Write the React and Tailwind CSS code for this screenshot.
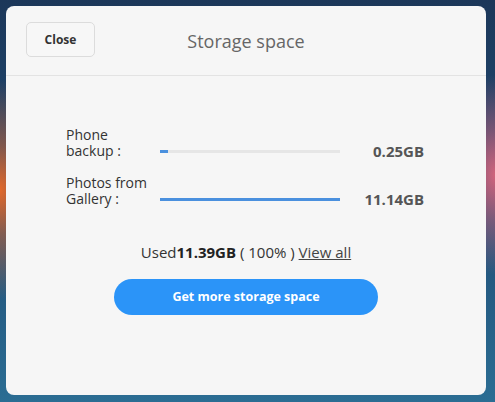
import React from "react";

export default function App() {
  return (
    <div
      className="w-[495px] h-[402px] pt-[6px] pl-[6px] pr-[9px] pb-[7px] bg-[radial-gradient(ellipse_60px_110px_at_0px_190px,#e2682a_0%,rgba(226,104,42,0.5)_40%,transparent_100%),radial-gradient(ellipse_50px_100px_at_495px_175px,#d2647c_0%,rgba(210,100,124,0.5)_45%,transparent_100%),linear-gradient(180deg,#1c3759_0%,#1f4a73_45%,#2b6d93_100%)]"
      style={{ fontFamily: '"Open Sans", "Noto Sans", sans-serif' }}
    >
      <div className="w-full h-full bg-[#f6f6f6] rounded-[8px] flex flex-col overflow-hidden">
        <div className="relative h-[70px] flex items-center justify-center border-b border-[#e3e3e3]">
          <button className="absolute left-[20px] top-[16px] w-[69px] h-[35px] rounded-[5px] border border-[#dcdcdc] bg-[#f7f7f7] text-[12px] font-bold text-[#333]">
            Close
          </button>
          <div className="text-[18px] text-[#666] mt-[2px]">Storage space</div>
        </div>
        <div className="flex flex-col pl-[60px] pr-[62px] pt-[51px]">
          <div className="flex items-end">
            <div className="w-[94px] text-[14px] leading-[16px] text-[#333]">
              Phone
              <br />
              backup :
            </div>
            <div className="w-[180px] h-[3px] bg-[#e6e6e6] mb-[6px]">
              <div className="h-full w-[8px] bg-[#4a90de]" />
            </div>
            <div className="flex-1 text-right text-[15px] font-bold text-[#555] leading-[16px]">
              0.25GB
            </div>
          </div>
          <div className="flex items-end mt-[16px]">
            <div className="w-[94px] text-[14px] leading-[16px] text-[#333]">
              Photos from
              <br />
              Gallery :
            </div>
            <div className="w-[180px] h-[3px] bg-[#e6e6e6] mb-[6px]">
              <div className="h-full w-full bg-[#4a90de]" />
            </div>
            <div className="flex-1 text-right text-[15px] font-bold text-[#555] leading-[16px]">
              11.14GB
            </div>
          </div>
        </div>
        <div className="mt-[36px] text-center text-[15px] text-[#333] leading-[18px]">
          Used<span className="font-bold text-[#222]">11.39GB</span> ( 100% ){" "}
          <span className="underline text-[#444]">View all</span>
        </div>
        <div className="flex justify-center mt-[18px]">
          <button className="w-[264px] h-[36px] rounded-full bg-[#2b94f8] text-white text-[12.5px] font-bold">
            Get more storage space
          </button>
        </div>
      </div>
    </div>
  );
}
